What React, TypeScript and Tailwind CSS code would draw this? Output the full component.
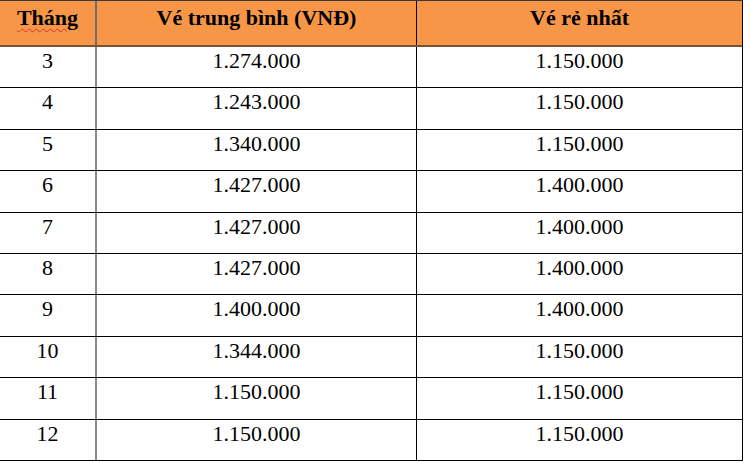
import React from "react";

const rows: [string, string, string][] = [
  ["3", "1.274.000", "1.150.000"],
  ["4", "1.243.000", "1.150.000"],
  ["5", "1.340.000", "1.150.000"],
  ["6", "1.427.000", "1.400.000"],
  ["7", "1.427.000", "1.400.000"],
  ["8", "1.427.000", "1.400.000"],
  ["9", "1.400.000", "1.400.000"],
  ["10", "1.344.000", "1.150.000"],
  ["11", "1.150.000", "1.150.000"],
  ["12", "1.150.000", "1.150.000"],
];

const App = () => {
  return (
    <div className="w-[750px] h-[463px] bg-white font-['Liberation_Serif',serif] text-black overflow-hidden">
      <div className="w-[743px] border-r border-black">
        {/* header */}
        <div className="flex h-[47px] bg-[#f79646] border-t border-[#3a3a3a] border-b-2 border-b-[#7a5234] text-[22px] font-bold leading-[1.15]">
          <div className="w-[97px] border-r-2 border-[#6f6f6f] flex justify-center pt-[4px]">
            <span className="underline decoration-wavy decoration-[#e0302a] decoration-1 underline-offset-[3px]">Tháng</span>
          </div>
          <div className="w-[320px] border-r border-black flex justify-center pt-[4px]">Vé trung bình (VNĐ)</div>
          <div className="flex-1 flex justify-center pt-[4px]">Vé rẻ nhất</div>
        </div>
        {/* rows */}
        {rows.map(([m, avg, min]) => (
          <div key={m} className="flex h-[41.4px] border-b border-black text-[22px] leading-[1.15]">
            <div className="w-[97px] border-r-2 border-[#8a8a8a] flex justify-center pt-[1px]">{m}</div>
            <div className="w-[320px] border-r border-black flex justify-center pt-[1px]">{avg}</div>
            <div className="flex-1 flex justify-center pt-[1px]">{min}</div>
          </div>
        ))}
      </div>
    </div>
  );
};

export default App;
